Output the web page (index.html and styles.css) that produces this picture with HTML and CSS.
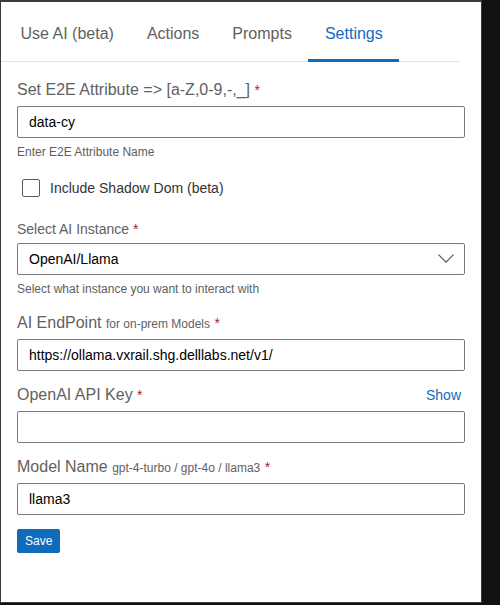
FILE: index.html
```html
<!DOCTYPE html>
<html lang="en">
<head>
<meta charset="utf-8">
<title>Settings</title>
<link rel="stylesheet" href="styles.css">
</head>
<body>
<div class="panel">
  <nav class="tabs">
    <div class="tab">Use AI (beta)</div>
    <div class="tab">Actions</div>
    <div class="tab">Prompts</div>
    <div class="tab active">Settings</div>
  </nav>
  <form class="form">
    <label class="label first">Set E2E Attribute =&gt; [a-Z,0-9,-,_] <span class="req">*</span></label>
    <input class="input" type="text" value="data-cy">
    <div class="hint">Enter E2E Attribute Name</div>

    <div class="check-row">
      <input class="check" type="checkbox">
      <span class="check-label">Include Shadow Dom (beta)</span>
    </div>

    <label class="label small">Select AI Instance <span class="req">*</span></label>
    <div class="select-wrap">
      <select class="select"><option>OpenAI/Llama</option></select>
      <svg class="chevron" width="16" height="9" viewBox="0 0 16 9"><path d="M0.5 0.6 L8 8.1 L15.5 0.6" fill="none" stroke="#555" stroke-width="1.2"/></svg>
    </div>
    <div class="hint">Select what instance you want to interact with</div>

    <label class="label after-hint">AI EndPoint <span class="sub">for on-prem Models</span> <span class="req">*</span></label>
    <input class="input" type="text" value="https://ollama.vxrail.shg.delllabs.net/v1/">

    <div class="label-row">
      <label class="label inline">OpenAI API Key <span class="req">*</span></label>
      <span class="show">Show</span>
    </div>
    <input class="input" type="password" value="">

    <label class="label group">Model Name <span class="sub">gpt-4-turbo / gpt-4o / llama3</span> <span class="req">*</span></label>
    <input class="input" type="text" value="llama3">

    <button class="btn" type="button">Save</button>
  </form>
</div>
</body>
</html>
```
FILE: styles.css
```css
body {
  margin: 0;
  background: #121212;
  font-family: "Liberation Sans", Arial, sans-serif;
}

.panel {
  width: 480px;
  height: 600px;
  background: #fff;
  border: 1px solid #3a3d3e;
  border-top-width: 2px;
}

.tabs {
  display: flex;
  align-items: flex-start;
  height: 60px;
  box-sizing: border-box;
  padding-left: 3px;
  margin-right: 21px;
  border-bottom: 1px solid #e2e2e2;
}

.tab {
  height: 60px;
  box-sizing: border-box;
  margin-bottom: -1px;
  padding: 22px 16.5px 0;
  font-size: 16px;
  line-height: 20px;
  color: #616161;
  border-bottom: 3px solid transparent;
}

.tab.active {
  color: #0f6cbd;
  border-bottom-color: #0f6cbd;
}

.form {
  display: flex;
  flex-direction: column;
  padding: 0 16px;
}

.label {
  display: block;
  font-size: 16px;
  line-height: 20px;
  color: #616161;
  margin-top: 14px;
}

.label.first {
  margin-top: 18px;
}

.label.small {
  font-size: 14px;
  margin-top: 22px;
}

.label.after-hint {
  margin-top: 16px;
}

.label.inline {
  margin-top: 0;
}

.req {
  color: #a4262c;
  font-size: 14px;
  line-height: 1;
}

.sub {
  font-size: 12px;
  line-height: 1;
}

.input {
  display: block;
  box-sizing: border-box;
  width: 100%;
  height: 32px;
  margin: 6px 0 0;
  padding: 0 11px;
  border: 1px solid #7a7a7a;
  border-radius: 2px;
  font-family: "Liberation Sans", Arial, sans-serif;
  font-size: 14px;
  color: #000;
  background: #fff;
}

.hint {
  margin-top: 6px;
  font-size: 12px;
  line-height: 16px;
  color: #605e5c;
}

.check-row {
  display: flex;
  align-items: center;
  margin-top: 19px;
  height: 18px;
}

.check {
  appearance: none;
  width: 18px;
  height: 18px;
  margin: 0 10px 0 5px;
  border: 1px solid #5c5c5c;
  border-radius: 2px;
  background: #fff;
}

.check-label {
  font-size: 14px;
  line-height: 18px;
  color: #333;
}

.select-wrap {
  position: relative;
  margin-top: 4px;
}

.select {
  appearance: none;
  display: block;
  box-sizing: border-box;
  width: 100%;
  height: 32px;
  margin: 0;
  padding: 0 11px;
  border: 1px solid #7a7a7a;
  border-radius: 2px;
  font-family: "Liberation Sans", Arial, sans-serif;
  font-size: 14px;
  color: #000;
  background: #fff;
}

.chevron {
  position: absolute;
  right: 11px;
  top: 11px;
}

.label-row {
  display: flex;
  justify-content: space-between;
  align-items: center;
  margin-top: 14px;
}

.show {
  font-size: 14px;
  line-height: 16px;
  color: #0f6cbd;
  padding-right: 4px;
}

.btn {
  align-self: flex-start;
  margin-top: 14px;
  height: 24px;
  padding: 0 8px;
  border: none;
  border-radius: 2px;
  background: #0f6cbd;
  color: #fff;
  font-family: "Liberation Sans", Arial, sans-serif;
  font-size: 12px;
}
```
